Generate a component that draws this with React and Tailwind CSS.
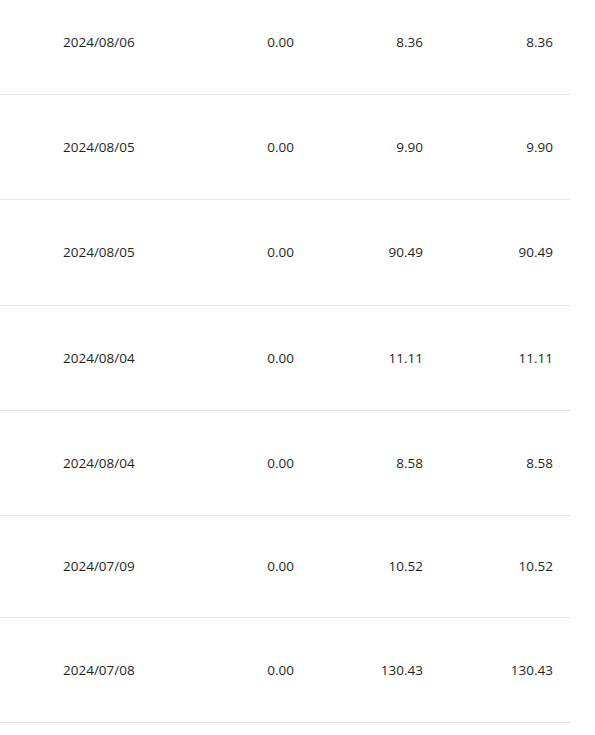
import React from 'react';

const rows = [
  { date: '2024/08/06', a: '0.00', b: '8.36', c: '8.36', h: 'h-[105px]' },
  { date: '2024/08/05', a: '0.00', b: '9.90', c: '9.90', h: 'h-[105px]' },
  { date: '2024/08/05', a: '0.00', b: '90.49', c: '90.49', h: 'h-[106px]' },
  { date: '2024/08/04', a: '0.00', b: '11.11', c: '11.11', h: 'h-[105px]' },
  { date: '2024/08/04', a: '0.00', b: '8.58', c: '8.58', h: 'h-[105px]' },
  { date: '2024/07/09', a: '0.00', b: '10.52', c: '10.52', h: 'h-[102px]' },
  { date: '2024/07/08', a: '0.00', b: '130.43', c: '130.43', h: 'h-[105px]' },
];

const App = () => {
  return (
    <div className="h-[735px] overflow-hidden bg-white font-['Open_Sans',sans-serif] text-[13.5px] text-[#1f1f1f]">
      <div className="w-[570px] -mt-[10px]">
        {rows.map((row, i) => (
          <div
            key={i}
            className={`grid grid-cols-[170px_140px_129px_131px] items-center border-b border-[#e6e6e6] ${row.h}`}
          >
            <div className="pl-[63px]">{row.date}</div>
            <div className="pr-4 text-right">{row.a}</div>
            <div className="pr-4 text-right">{row.b}</div>
            <div className="pr-[17px] text-right">{row.c}</div>
          </div>
        ))}
      </div>
    </div>
  );
};

export default App;
